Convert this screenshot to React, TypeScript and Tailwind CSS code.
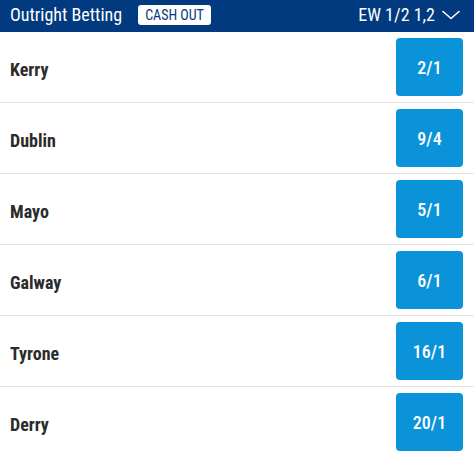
const RUNNERS: { name: string; odds: string }[] = [
  { name: 'Kerry', odds: '2/1' },
  { name: 'Dublin', odds: '9/4' },
  { name: 'Mayo', odds: '5/1' },
  { name: 'Galway', odds: '6/1' },
  { name: 'Tyrone', odds: '16/1' },
  { name: 'Derry', odds: '20/1' },
];

export default function App() {
  return (
    <div className="w-[474px] h-[456px] overflow-hidden bg-white font-['Roboto',sans-serif] [font-stretch:75%]">
      <div className="h-8 bg-[#013a7e] flex items-center pl-[10px] pr-[14px]">
        <span className="text-white text-[18px] leading-none -mt-[3px]">Outright Betting</span>
        <span className="ml-[16px] -mt-[3px] bg-white text-[#013a7e] text-[14px] leading-none rounded-[3px] px-[7px] py-[3px]">
          CASH OUT
        </span>
        <div className="ml-auto -mt-[3px] flex items-center gap-[7px] text-white">
          <span className="text-[18px] leading-none">EW 1/2 1,2</span>
          <svg width="18" height="10" viewBox="0 0 18 10" fill="none" className="mt-[1px]">
            <polyline points="1,1.5 9,8.5 17,1.5" stroke="white" strokeWidth="1.6" strokeLinecap="round" strokeLinejoin="round" />
          </svg>
        </div>
      </div>
      {RUNNERS.map((r) => (
        <div
          key={r.name}
          className="h-[71px] flex items-center justify-between pl-[10px] pr-[11px] border-b border-[#e4e4e4]"
        >
          <span className="text-[18px] leading-none font-bold text-[#2b2b2b] mt-[6px]">{r.name}</span>
          <button className="w-[67px] h-[58px] rounded-[4px] bg-[#0a93d9] text-white text-[18px] font-medium">
            {r.odds}
          </button>
        </div>
      ))}
    </div>
  );
}
